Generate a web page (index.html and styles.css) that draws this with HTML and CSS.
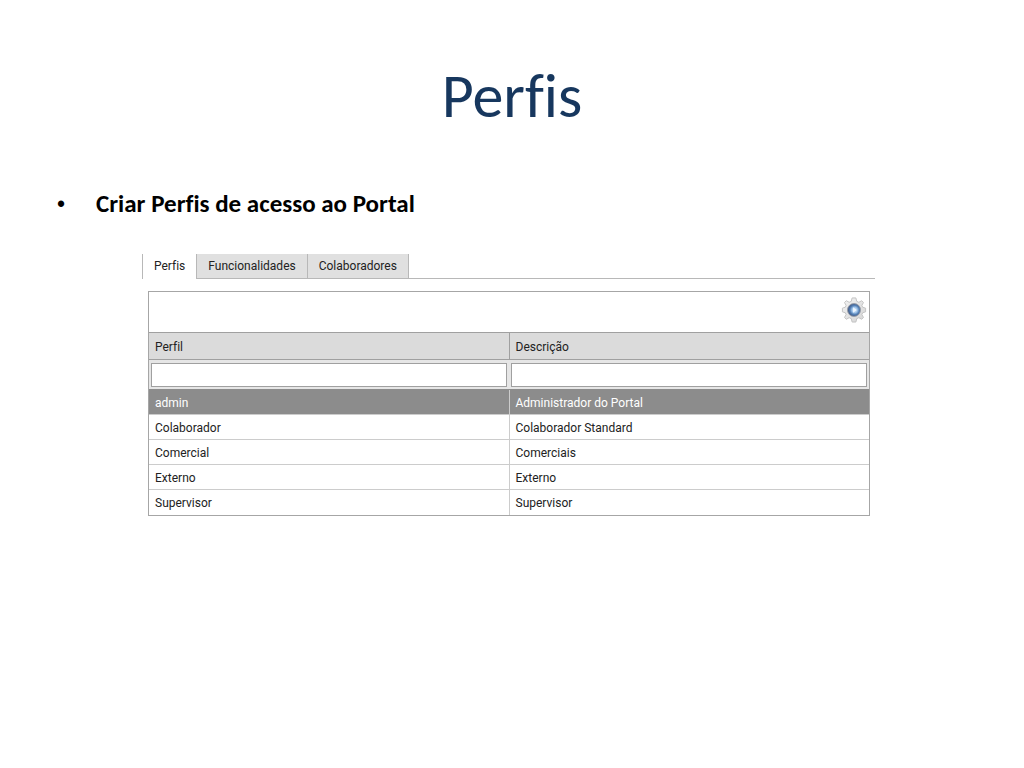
FILE: index.html
```html
<!DOCTYPE html>
<html lang="pt">
<head>
    <meta charset="UTF-8">
    <meta name="viewport" content="width=device-width, initial-scale=1.0">
    <title>Perfis</title>
    <link rel="stylesheet" href="styles.css">
</head>
<body>
    <main class="slide">
        <h1>Perfis</h1>
        <ul class="topics">
            <li>Criar Perfis de acesso ao Portal</li>
        </ul>

        <section class="portal">
            <div class="tabs" role="tablist">
                <button type="button" class="tab active" role="tab" aria-selected="true">Perfis</button>
                <button type="button" class="tab" role="tab" aria-selected="false">Funcionalidades</button>
                <button type="button" class="tab" role="tab" aria-selected="false">Colaboradores</button>
            </div>

            <div class="grid">
                <div class="toolbar">
                    <button type="button" class="settings" aria-label="Opções">
                        <svg width="26" height="28" viewBox="-14 -14 28 28">
                            <defs>
                                <linearGradient id="metal" x1="0" y1="0" x2="1" y2="1">
                                    <stop offset="0" stop-color="#f4f4f4"/>
                                    <stop offset="1" stop-color="#d4d4d4"/>
                                </linearGradient>
                                <radialGradient id="lens" cx="0.55" cy="0.5">
                                    <stop offset="0" stop-color="#e4f2ff"/>
                                    <stop offset="0.4" stop-color="#a3c7ec"/>
                                    <stop offset="0.7" stop-color="#5480b5"/>
                                    <stop offset="1" stop-color="#405a86"/>
                                </radialGradient>
                            </defs>
                            <path fill="url(#metal)" stroke="#c0c0c0" stroke-width="1" stroke-linejoin="round" d="M-2-13H2L3-9.300 5.200-8.300 8.300-10 10.200-8 8.500-5 9.300-3 12.500-2V2L9.300 3 8.500 5 10.200 8 8.300 10 5.200 8.300 3 9.300 2 13H-2L-3 9.300-5.200 8.300-8.300 10-10.200 8-8.500 5-9.300 3-12.500 2V-2L-9.300-3-8.500-5-10.200-8-8.300-10-5.200-8.300-3-9.300Z"/>
                            <circle r="7" fill="url(#lens)" stroke="#9a9fa8"/>
                            <path fill="#eef7ff" d="M-1-3L3 0-1 3Z"/>
                        </svg>
                    </button>
                </div>
                <table>
                    <thead>
                        <tr>
                            <th scope="col">Perfil</th>
                            <th scope="col">Descrição</th>
                        </tr>
                        <tr class="filters">
                            <td><input type="text" aria-label="Filtrar por perfil"></td>
                            <td><input type="text" aria-label="Filtrar por descrição"></td>
                        </tr>
                    </thead>
                    <tbody>
                        <tr class="selected"><td>admin</td><td>Administrador do Portal</td></tr>
                        <tr><td>Colaborador</td><td>Colaborador Standard</td></tr>
                        <tr><td>Comercial</td><td>Comerciais</td></tr>
                        <tr><td>Externo</td><td>Externo</td></tr>
                        <tr><td>Supervisor</td><td>Supervisor</td></tr>
                    </tbody>
                </table>
            </div>
        </section>
    </main>
</body>
</html>
```
FILE: styles.css
```css
/* General Reset */
* {
    margin: 0;
    padding: 0;
    box-sizing: border-box;
}

body {
    font-family: Carlito, Lato, sans-serif;
    font-variant-ligatures: none;
    background: #fff;
    color: #000;
}

.slide {
    padding: 60px 48px;
}

h1 {
    font-size: 62px;
    font-weight: 400;
    line-height: 72px;
    text-align: center;
    color: #17375e;
}

/* Topic list */
.topics {
    margin-top: 56px;
    list-style: none;
    font-size: 25px;
    font-weight: 700;
    line-height: 32px;
}

.topics li {
    display: flex;
}

.topics li::before {
    content: "•";
    width: 39px;
    padding-left: 9px;
    font-family: "Liberation Sans", sans-serif;
    font-size: 23px;
    font-weight: 400;
}

/* Portal panel */
.portal {
    margin: 34px 101px 0 94px;
    font-family: Roboto, sans-serif;
    font-size: 12px;
    color: #222;
}

.tabs {
    display: flex;
    border-bottom: 1px solid #b8b8b8;
}

.tab {
    height: 24px;
    padding: 0 11px;
    border: solid #b8b8b8;
    border-width: 0 1px 0 0;
    background: #e0e0e0;
    font: inherit;
    color: inherit;
}

.tab.active {
    height: 25px;
    margin-bottom: -1px;
    padding-bottom: 1px;
    border-left-width: 1px;
    background: #fff;
}

/* Grid */
.grid {
    margin: 12px 5px 0 6px;
    border: 1px solid #a6a6a6;
}

.toolbar {
    display: flex;
    justify-content: flex-end;
    height: 40px;
    padding: 4px 2px;
}

.settings {
    border: none;
    background: none;
    height: 28px;
}

.settings svg {
    display: block;
}

table {
    width: 100%;
    table-layout: fixed;
    border-collapse: collapse;
}

th,
td {
    height: 25px;
    padding: 2px 6px 0;
    border-top: 1px solid #ccc;
    font-weight: 400;
    text-align: left;
}

th + th,
td + td {
    border-left: 1px solid #ccc;
}

th {
    height: 27px;
    border-color: #a0a0a0;
    background: #dbdbdb;
}

th + th {
    border-color: #a0a0a0;
}

.filters td {
    height: 30px;
    padding: 0 2px;
    border-top-color: #a0a0a0;
    border-left: none;
    background: #e6e6e6;
}

.filters input {
    display: block;
    width: 100%;
    height: 24px;
    padding: 0 4px;
    border: 1px solid #a0a0a0;
    background: #fff;
    font: inherit;
}

.selected td {
    border-top-color: #8c8c8c;
    background: #8c8c8c;
    color: #fff;
}
```
